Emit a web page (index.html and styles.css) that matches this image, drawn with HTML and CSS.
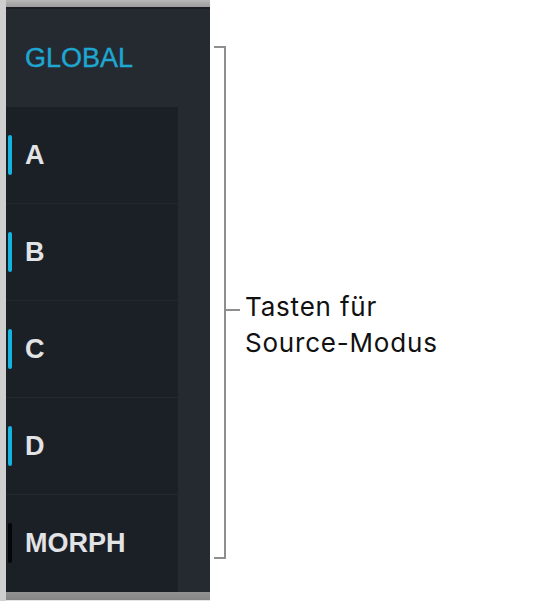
FILE: index.html
```html
<!DOCTYPE html>
<html lang="de">
<head>
  <meta charset="UTF-8">
  <meta name="viewport" content="width=device-width, initial-scale=1.0">
  <title>Source-Modus</title>
  <link rel="stylesheet" href="styles.css">
</head>
<body>

<div class="page">
  <div class="device">
    <div class="topbar"></div>
    <div class="panel">
      <div class="global">GLOBAL</div>
      <div class="rows">
        <div class="row"><span class="mark"></span><span class="key">A</span></div>
        <div class="row"><span class="mark"></span><span class="key">B</span></div>
        <div class="row"><span class="mark"></span><span class="key">C</span></div>
        <div class="row"><span class="mark"></span><span class="key">D</span></div>
        <div class="row"><span class="mark off"></span><span class="key">MORPH</span></div>
      </div>
    </div>
    <div class="bottombar"></div>
  </div>

  <div class="callout">
    <div class="bracket"></div>
    <div class="note">
      <span class="tick"></span>
      <p class="label">Tasten für<br>Source-Modus</p>
    </div>
  </div>
</div>

</body>
</html>
```

FILE: styles.css
```css
body {
  margin: 0;
  padding: 0;
  background: #fff;
  font-family: 'Liberation Sans', Arial, sans-serif;
}
.page {
  display: flex;
  height: 601px;
}
.device {
  width: 204px;
  height: 601px;
  border-left: 6px solid #cfcfcf;
  display: flex;
  flex-direction: column;
  background: #252a31;
}
.topbar {
  height: 7px;
  background: linear-gradient(#b8b8b8, #9c9c9c);
  border-bottom: 2px solid #1b1f25;
}
.panel {
  flex: 1;
  display: flex;
  flex-direction: column;
}
.global {
  height: 98px;
  display: flex;
  align-items: center;
  padding-left: 19px;
  font-size: 27px;
  color: #1ea7d1;
  -webkit-text-stroke: 0.4px #1ea7d1;
}
.rows {
  width: 172px;
  flex: 1;
  background: #1b1f26;
}
.row {
  height: 96px;
  display: flex;
  align-items: center;
  padding-left: 2px;
  border-bottom: 1px solid #242930;
}
.row:last-child {
  border-bottom: none;
}
.mark {
  width: 4px;
  height: 40px;
  border-radius: 2px;
  background: #17b3df;
  margin-right: 13px;
}
.mark.off {
  background: #050608;
}
.key {
  font-size: 27px;
  font-weight: 700;
  color: #e2e3e4;
}
.bottombar {
  height: 8px;
  background: linear-gradient(#929292, #868686);
  border-bottom: 1px solid #e4e4e4;
}
.callout {
  display: flex;
  margin-top: 46px;
  margin-left: 4px;
  height: 513px;
}
.bracket {
  width: 12px;
  box-sizing: border-box;
  border: 2px solid #8e8e8e;
  border-left: none;
}
.note {
  display: flex;
  align-items: flex-start;
  margin-top: 243px;
}
.tick {
  width: 14px;
  height: 2px;
  background: #8e8e8e;
  margin-top: 20px;
  margin-right: 5px;
}
.label {
  margin: 0;
  font-family: Inter, 'Noto Sans', sans-serif;
  font-size: 26px;
  letter-spacing: 0.8px;
  line-height: 36px;
  color: #111;
}
```
